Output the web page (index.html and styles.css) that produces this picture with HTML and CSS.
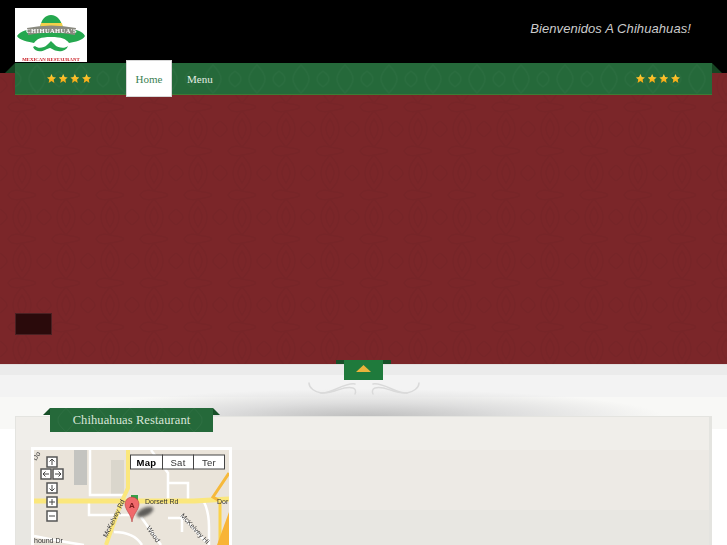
FILE: index.html
```html
<!DOCTYPE html>
<html lang="es">
<head>
<meta charset="utf-8">
<title>Chihuahuas Restaurant</title>
<link rel="stylesheet" href="styles.css">
</head>
<body>
<header class="top">
  <svg class="logo" width="72" height="54" viewBox="0 0 72 54">
    <rect width="72" height="54" fill="#fff"/>
    <path d="M25 20C26 12 30 7 36 7s10 5 12 13z" fill="#25a84f"/>
    <path d="M26 15h21l1 5H25z" fill="#f2d04a"/>
    <path d="M2 28c3-5 12-7 19-8h31c7 1 16 3 18 8-2 4-10 6-16 7-3-4-7-6-18-6s-14 2-17 6C14 34 4 32 2 28z" fill="#25a84f"/>
    <path d="M12 20Q36 15 61 20L60 27Q36 22 13 27z" fill="#8a8a80"/>
    <text class="logo-name" x="36.500" y="25" text-anchor="middle">CHIHUAHUA'S</text>
    <path d="M20 38c3 3 9 2 12-1 2-2 3-3 4-4 1 1 3 3 4 4 3 3 10 4 13 1-2 6-10 6-14 4-2-1-3-2-4-2s-3 1-5 2c-4 2-10 2-12-3z" fill="#25a84f"/>
    <text class="logo-sub" x="36" y="53" text-anchor="middle">MEXICAN RESTAURANT</text>
  </svg>
  <p class="tagline">Bienvenidos A Chihuahuas!</p>
</header>

<section class="hero">
  <nav class="nav">
    <div class="stars"><i></i><i></i><i></i><i></i></div>
    <a class="nav-link active" href="#">Home</a>
    <a class="nav-link" href="#">Menu</a>
    <div class="stars stars-right"><i></i><i></i><i></i><i></i></div>
  </nav>
  <div class="slide-btn"></div>
</section>

<section class="lower">
  <div class="toggle">
    <svg width="15" height="7" viewBox="0 0 15 7"><path d="M7.500 0L15 7H0z" fill="#e9b33c"/></svg>
  </div>
  <svg class="flourish" width="114" height="15" viewBox="0 0 114 15">
    <g fill="none" stroke="#dadada" stroke-width="1.500" stroke-linecap="round">
      <path d="M2 2c0 5 6 9 12 10 10 1 24-11 34-9"/>
      <path d="M14 12c14 1 22-8 32-5 3 1 3 4 2 6"/>
      <path d="M112 2c0 5-6 9-12 10-10 1-24-11-34-9"/>
      <path d="M100 12c-14 1-22-8-32-5-3 1-3 4-2 6"/>
    </g>
  </svg>
  <div class="panel">
    <h1 class="ribbon">Chihuahuas Restaurant</h1>
    <svg class="map" width="195" height="95" viewBox="0 0 195 95">
      <rect width="195" height="95" fill="#eae4da"/>
      <rect x="40" y="0" width="13" height="35" fill="#c4c4c0"/>
      <rect x="77" y="10" width="13" height="36" fill="#dad6cc"/>
      <g fill="none" stroke="#fff" stroke-width="2.500">
        <path d="M56 0V45H92"/>
        <path d="M55 53V65H97"/>
        <path d="M117 0L134 23V50"/>
        <path d="M134 33H154V50"/>
        <path d="M107 67L127 95"/>
        <path d="M147 65L172 92"/>
        <path d="M170 52q5 10 5 25v18"/>
        <path d="M134 68h14v14"/>
        <path d="M0 86q30 6 50 9"/>
        <path d="M80 82q20 0 28 13"/>
      </g>
      <path d="M0 51H160L195 49" stroke="#fbe77c" stroke-width="5" fill="none"/>
      <path d="M94 0V38L87 53L72 95" stroke="#fbe77c" stroke-width="4" fill="none"/>
      <path d="M186 52V95" stroke="#fbd24a" stroke-width="3" fill="none"/>
      <path d="M195 23L179 47L184 50" stroke="#f6b93b" stroke-width="3" fill="none"/>
      <path d="M195 62V95H183z" fill="#f8b436"/>
      <g class="map-label">
        <text x="111" y="54">Dorsett Rd</text>
        <text x="183" y="54">Dor</text>
        <text x="0" y="93">hound Dr</text>
        <text transform="translate(73 88) rotate(-64)">McKelvey Rd</text>
        <text transform="translate(146 66) rotate(47)">McKelvey Hi</text>
        <text transform="translate(112 78) rotate(55)">Wood</text>
        <text transform="translate(2 11) rotate(-58)">Do</text>
      </g>
      <ellipse class="pin-shadow" cx="111" cy="62" rx="9" ry="4" transform="rotate(-25 111 62)"/>
      <rect x="97" y="45" width="7" height="5" fill="#35a04a"/>
      <path d="M98 72C97 64 91 60 91 54a7 7 0 0 1 14 0c0 6-6 10-7 18z" fill="#f0696b" stroke="#a33" stroke-width=".5"/>
      <text class="pin-letter" x="98" y="58" text-anchor="middle">A</text>
      <g class="ctl">
        <rect x="13" y="7" width="10" height="10"/><rect x="7" y="19" width="10" height="10"/>
        <rect x="19" y="19" width="10" height="10"/><rect x="13" y="33" width="10" height="10"/>
        <rect x="13" y="47" width="10" height="10"/><rect x="13" y="61" width="10" height="10"/>
      </g>
      <g class="ctl-mark">
        <path d="M18 15V9M15.500 11.500L18 9l2.500 2.500"/>
        <path d="M15 24H9M11.500 21.500L9 24l2.500 2.500"/>
        <path d="M21 24h6M24.500 21.500L27 24l-2.500 2.500"/>
        <path d="M18 35v6M15.500 38.500L18 41l2.500-2.500"/>
        <path d="M15 52h6M18 49v6"/>
        <path d="M15 66h6"/>
      </g>
      <g class="map-tabs">
        <rect x="96.500" y="5" width="32" height="14"/>
        <rect x="128.500" y="5" width="31" height="14"/>
        <rect x="159.500" y="5" width="31" height="14"/>
      </g>
      <text class="tab-on" x="112.500" y="15.500" text-anchor="middle">Map</text>
      <text class="tab-off" x="144" y="15.500" text-anchor="middle">Sat</text>
      <text class="tab-off" x="175" y="15.500" text-anchor="middle">Ter</text>
    </svg>
  </div>
</section>
</body>
</html>
```
FILE: styles.css
```css
html, body {
  margin: 0;
  height: 545px;
  overflow: hidden;
  background: #fff;
}

.top {
  height: 63px;
  background: #000;
  display: flex;
  justify-content: space-between;
  align-items: flex-start;
  padding: 8px 36px 0 15px;
  box-sizing: border-box;
}

.logo { display: block; filter: blur(.4px); }
.logo-name { font: bold 6.500px "Liberation Serif", serif; fill: #fff; letter-spacing: .4px; }
.logo-sub { font: bold 4.800px "Liberation Serif", serif; fill: #c8161d; }

.tagline {
  margin: 13px 0 0;
  font: italic 13px "Liberation Sans", sans-serif;
  letter-spacing: .08px;
  color: #cccccc;
}

.hero {
  height: 301px;
  box-sizing: border-box;
  padding: 0 15px;
  background-color: #7b2629;
  background-image:
    linear-gradient(#000 10px, transparent 10px),
    url("data:image/svg+xml,%3Csvg xmlns='http://www.w3.org/2000/svg' width='44' height='44'%3E%3Cg fill='none' stroke='%23000' stroke-width='1.500' opacity='.03'%3E%3Cpath d='M22 4c5 6 9 10 9 18s-4 12-9 18c-5-6-9-10-9-18s4-12 9-18z'/%3E%3Cpath d='M22 12c2 3 4 6 4 10s-2 7-4 10c-2-3-4-6-4-10s2-7 4-10z'/%3E%3Cpath d='M0 14c4 3 7 5 7 8s-3 5-7 8M44 14c-4 3-7 5-7 8s3 5 7 8M8 0c2 4 6 6 14 4s12-1 14-4M8 44c2-4 6-6 14-4s12 1 14 4'/%3E%3C/g%3E%3C/svg%3E");
  position: relative;
}

.hero::before, .hero::after {
  content: "";
  position: absolute;
  top: 0;
  width: 10px;
  height: 10px;
  background: #174523;
}
.hero::before { left: 5px; clip-path: polygon(100% 0, 100% 100%, 0 100%); }
.hero::after { right: 5px; clip-path: polygon(0 0, 100% 100%, 0 100%); }

.nav {
  height: 31px;
  display: flex;
  align-items: center;
  padding: 0 32px;
  background-color: #25693a;
  background-image: url("data:image/svg+xml,%3Csvg xmlns='http://www.w3.org/2000/svg' width='44' height='32'%3E%3Cg fill='none' stroke='%23fff' stroke-width='1.500' opacity='.025'%3E%3Cpath d='M22 2c5 5 8 9 8 14s-3 9-8 14c-5-5-8-9-8-14s3-9 8-14z'/%3E%3Cpath d='M0 8c4 3 6 5 6 8s-2 5-6 8M44 8c-4 3-6 5-6 8s2 5 6 8'/%3E%3C/g%3E%3C/svg%3E");
  border-bottom: 1px solid #3f7a35;
}

.stars { display: flex; gap: 2.700px; }
.stars i {
  display: block;
  width: 9px;
  height: 9px;
  background: linear-gradient(#ffd23c, #f5a30f);
  clip-path: polygon(50% 0, 65% 34%, 100% 38%, 74% 61%, 82% 100%, 50% 79%, 18% 100%, 26% 61%, 0 38%, 35% 34%);
}
.stars-right { margin-left: auto; }

.nav-link {
  font: 11px "Liberation Serif", serif;
  text-decoration: none;
  color: #e4ede4;
  padding: 0 15px;
}
.nav-link.active {
  box-sizing: border-box;
  width: 46px;
  height: 37px;
  margin: 0 0 0 35px;
  padding: 0;
  display: flex;
  align-items: center;
  justify-content: center;
  background: #fff;
  border: 1px solid #d8d8d8;
  color: #3c7f53;
}

.slide-btn {
  box-sizing: border-box;
  width: 37px;
  height: 22px;
  margin-top: 218px;
  background: #2a0a0b;
  border: 1px solid #4a2022;
}

.lower {
  height: 181px;
  display: flex;
  flex-direction: column;
  align-items: center;
  border-top: 1px solid #e2dede;
  box-sizing: border-box;
  background:
    radial-gradient(ellipse 300px 28px at 363px 52px, #bdbdbd 0, #dedede 50%, transparent 100%),
    linear-gradient(#ebebeb 10px, #f3f3f3 10px, #f3f3f3 32px, #f8f8f6 32px, #f8f8f6 64px, #fff 64px);
}

.toggle {
  position: relative;
  width: 39px;
  height: 20px;
  margin-top: -5px;
  display: flex;
  justify-content: center;
  padding-top: 5px;
  box-sizing: border-box;
  background: #1f7a3c;
}
.toggle::before, .toggle::after {
  content: "";
  position: absolute;
  top: 0;
  width: 8px;
  height: 4px;
  background: #174f28;
}
.toggle::before { left: -8px; }
.toggle::after { right: -8px; }

.flourish { display: block; margin-top: 1px; }

.panel {
  align-self: stretch;
  flex: 1;
  margin: 20px 15px 0;
  box-sizing: border-box;
  padding: 0 0 0 15px;
  background: linear-gradient(#f0eeea 33px, #edeae5 33px, #edeae5 93px, #e8e7e2 93px);
  border: 1px solid #e4e4e0;
  border-right-width: 3px;
  border-bottom: 0;
}

.ribbon {
  position: relative;
  width: 163px;
  height: 24px;
  box-sizing: border-box;
  margin: -9px 0 15px 19px;
  background-color: #25693a;
  background-image: url("data:image/svg+xml,%3Csvg xmlns='http://www.w3.org/2000/svg' width='32' height='24'%3E%3Cpath d='M16 0c5 6 8 8 8 12s-3 7-8 12c-5-5-8-8-8-12s3-6 8-12z' fill='none' stroke='%23fff' opacity='.03'/%3E%3C/svg%3E");
  font: 400 12.500px/24px "Liberation Serif", serif;
  letter-spacing: .1px;
  color: #d9e6d9;
  text-align: center;
}
.ribbon::before, .ribbon::after {
  content: "";
  position: absolute;
  top: 0;
  width: 7px;
  height: 7px;
  background: #174f28;
}
.ribbon::before { left: -7px; clip-path: polygon(100% 0, 100% 100%, 0 100%); }
.ribbon::after { right: -7px; clip-path: polygon(0 0, 100% 100%, 0 100%); }

.map {
  display: block;
  border: 3px solid #fff;
  border-bottom: 0;
  filter: blur(.3px);
}
.map-label text { font: 7px "Liberation Sans", sans-serif; fill: #333; }
.pin-shadow { fill: #222; opacity: .7; filter: blur(1.500px); }
.pin-letter { font: bold 8px "Liberation Sans", sans-serif; fill: #7a1a1a; }
.ctl rect { fill: #fff; stroke: #555; stroke-width: 1.500; }
.ctl-mark path { fill: none; stroke: #444; stroke-width: 1; }
.map-tabs rect { fill: #fff; stroke: #444; stroke-width: 1; }
.tab-on { font: bold 9.500px "Liberation Sans", sans-serif; letter-spacing: .3px; fill: #000; }
.tab-off { font: 9.500px "Liberation Sans", sans-serif; letter-spacing: .3px; fill: #333; }
```
